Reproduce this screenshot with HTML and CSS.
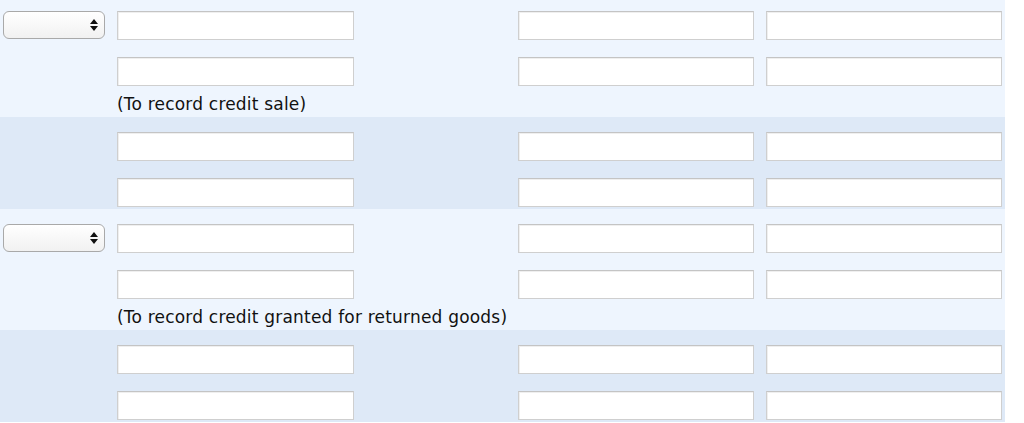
FILE: index.html
```html
<!DOCTYPE html>
<html>
<head>
<meta charset="utf-8">
<link rel="stylesheet" href="styles.css">
</head>
<body>
<div class="sheet">
  <div class="band light">
    <div class="row">
      <div class="sel"><svg width="8" height="12" viewBox="0 0 8 12"><path d="M4 0 L8 5 L0 5 Z M0 7 L8 7 L4 12 Z" fill="#111"/></svg></div>
      <div class="inp c1"></div><div class="inp c2"></div><div class="inp c3"></div>
    </div>
    <div class="row">
      <div class="spacer"></div>
      <div class="inp c1"></div><div class="inp c2"></div><div class="inp c3"></div>
    </div>
    <div class="note">(To record credit sale)</div>
  </div>
  <div class="band dark">
    <div class="row">
      <div class="spacer"></div>
      <div class="inp c1"></div><div class="inp c2"></div><div class="inp c3"></div>
    </div>
    <div class="row">
      <div class="spacer"></div>
      <div class="inp c1"></div><div class="inp c2"></div><div class="inp c3"></div>
    </div>
  </div>
  <div class="band light">
    <div class="row">
      <div class="sel"><svg width="8" height="12" viewBox="0 0 8 12"><path d="M4 0 L8 5 L0 5 Z M0 7 L8 7 L4 12 Z" fill="#111"/></svg></div>
      <div class="inp c1"></div><div class="inp c2"></div><div class="inp c3"></div>
    </div>
    <div class="row">
      <div class="spacer"></div>
      <div class="inp c1"></div><div class="inp c2"></div><div class="inp c3"></div>
    </div>
    <div class="note">(To record credit granted for returned goods)</div>
  </div>
  <div class="band dark">
    <div class="row">
      <div class="spacer"></div>
      <div class="inp c1"></div><div class="inp c2"></div><div class="inp c3"></div>
    </div>
    <div class="row">
      <div class="spacer"></div>
      <div class="inp c1"></div><div class="inp c2"></div><div class="inp c3"></div>
    </div>
  </div>
</div>
</body>
</html>
```
FILE: styles.css
```css
html, body {
  margin: 0;
  padding: 0;
  background: #ffffff;
}
.sheet {
  width: 1005px;
  margin-top: -4px;
  font-family: "DejaVu Sans", Verdana, sans-serif;
  font-size: 17px;
  letter-spacing: 0.2px;
  color: #111;
}
.band.light { background: #eef5fe; }
.band.dark { background: #dee9f7; }
.row {
  height: 46px;
  display: flex;
  align-items: flex-start;
  padding-left: 3px;
  box-sizing: border-box;
  padding-top: 15px;
}
.sel, .spacer {
  width: 102px;
  height: 28px;
  box-sizing: border-box;
  flex: none;
}
.sel {
  border: 1px solid #a9a9a9;
  border-radius: 6px;
  background: linear-gradient(#ffffff, #f1f1f1);
  display: flex;
  align-items: center;
  justify-content: flex-end;
  padding-right: 6px;
}
.inp {
  height: 29px;
  width: 236px;
  box-sizing: border-box;
  background: #fff;
  border: 1px solid #cfcfcf;
  border-top-color: #c4c4c4;
  box-shadow: inset 1px 1px 0 #efefef;
  flex: none;
}
.c1 { margin-left: 12px; width: 237px; }
.c2 { margin-left: 164px; }
.c3 { margin-left: 12px; }
.note {
  height: 29px;
  padding-left: 117px;
  padding-top: 6px;
  box-sizing: border-box;
  line-height: 20px;
}
```
